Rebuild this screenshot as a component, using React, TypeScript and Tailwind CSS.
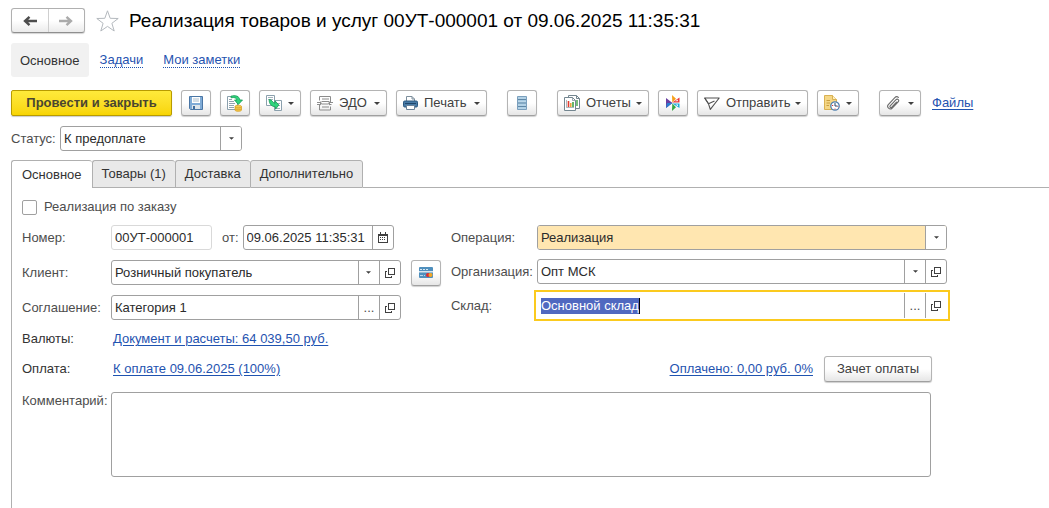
import React, { useEffect, useRef } from 'react';
import { clsx } from 'clsx';

const fieldBox = 'flex h-[25px] rounded-[3px] border border-[#a0a0a0] bg-white overflow-hidden';
const inputText = 'min-w-0 flex-1 bg-transparent px-[3px] text-[#2b2b2b] outline-none';
const sideButton = 'flex w-[21px] shrink-0 items-center justify-center border-l border-[#a0a0a0]';
const linkClass = 'text-[#1f53b0] underline underline-offset-2';

export default function App() {
  return (
    <main className="flex min-h-screen flex-col bg-white font-['Liberation_Sans',Arial,sans-serif] text-[13px] leading-4 text-[#4d4d4d]">
      {/* Title */}
      <header className="flex items-center pt-2 pl-[11px]">
        <div className="flex h-[25px] w-[74px] rounded-[3px] border border-[#b0b0b0] border-b-[#8f8f8f] bg-linear-to-b from-white from-50% to-[#ebebeb] shadow-[0_1px_1px_#d4d4d4]">
          <button aria-label="Назад" className="flex flex-1 items-center justify-center border-r border-[#cfcfcf] text-[#4d4d4d]">
            <ArrowIcon />
          </button>
          <button aria-label="Вперед" className="flex flex-1 items-center justify-center text-[#ababab]">
            <ArrowIcon flip />
          </button>
        </div>
        <button aria-label="В избранное" className="ml-[10px]">
          <svg width="25" height="24" viewBox="0 0 25 24" fill="none" stroke="#b4b9be">
            <path d="M12.5 1.8 15.2 9.3 23.2 9.5 16.9 14.3 19.2 22 12.5 17.4 5.8 22 8.1 14.3 1.8 9.5 9.8 9.3Z" />
          </svg>
        </button>
        <h1 className="ml-[9px] text-[19px] leading-6 text-black">
          Реализация товаров и услуг 00УТ-000001 от 09.06.2025 11:35:31
        </h1>
      </header>

      {/* Sections */}
      <nav className="mt-[10px] flex h-[34px] items-center pl-[11px]">
        <span className="flex h-full items-center rounded-[3px] bg-[#f1f1f1] px-[9px] pt-px text-[#333]">Основное</span>
        <a href="#tasks" className="ml-[11px] border-b border-dotted border-[#1f53b0] leading-[14px] text-[#1f53b0]">
          Задачи
        </a>
        <a href="#notes" className="ml-5 border-b border-dotted border-[#1f53b0] leading-[14px] text-[#1f53b0]">
          Мои заметки
        </a>
      </nav>

      <Toolbar />

      <div className="mt-[10px] flex items-center pl-[11px]">
        <label htmlFor="status" className="w-[49px]">Статус:</label>
        <SelectField id="status" value="К предоплате" className="w-[182px]" />
      </div>

      {/* Tabs */}
      <div role="tablist" className="mt-[9px] flex pl-[11px] text-[#333]">
        <Tab active>Основное</Tab>
        <Tab>Товары (1)</Tab>
        <Tab>Доставка</Tab>
        <Tab last>Дополнительно</Tab>
        <div className="flex-1 border-b border-[#b0b0b0]" />
      </div>

      <section className="ml-[11px] flex-1 border-l border-[#b0b0b0] pt-[11px] pr-4 pl-[10px]">
        <div className="max-w-[925px]">
          <label className="flex w-fit items-center gap-[7px]">
            <input type="checkbox" className="size-[15px] appearance-none rounded-[2px] border border-[#a0a0a0] bg-white" />
            Реализация по заказу
          </label>

          <div className="mt-[10px] flex gap-[10px]">
            <div className="flex flex-1 flex-col gap-[10px]">
              <div className="flex items-center">
                <label htmlFor="number" className="w-[89px] shrink-0">Номер:</label>
                <div className={clsx(fieldBox, 'w-[101px] border-[#d9d9d9]')}>
                  <input id="number" defaultValue="00УТ-000001" className={inputText} />
                </div>
                <label htmlFor="date" className="mr-[4px] ml-[10px]">от:</label>
                <div className={clsx(fieldBox, 'w-[151px]')}>
                  <input id="date" defaultValue="09.06.2025 11:35:31" className={inputText} />
                  <button aria-label="Выбрать дату" className={sideButton}><CalendarIcon /></button>
                </div>
              </div>
              <div className="flex h-[25px] items-center">
                <label htmlFor="client" className="w-[89px] shrink-0">Клиент:</label>
                <LookupField id="client" value="Розничный покупатель" />
                <ToolButton label="Карта лояльности" className="ml-[10px] w-[30px]"><CardIcon /></ToolButton>
              </div>
              <div className="flex items-center">
                <label htmlFor="agreement" className="w-[89px] shrink-0">Соглашение:</label>
                <LookupField id="agreement" value="Категория 1" dots />
                <div className="w-10 shrink-0" />
              </div>
            </div>

            <div className="flex flex-1 grow-[1.184] flex-col gap-[9px]">
              <div className="flex items-center">
                <label htmlFor="operation" className="w-[86px] shrink-0">Операция:</label>
                <SelectField id="operation" value="Реализация" className="flex-1" tinted />
              </div>
              <div className="flex items-center">
                <label htmlFor="company" className="w-[86px] shrink-0">Организация:</label>
                <LookupField id="company" value="Опт МСК" />
              </div>
              <div className="flex h-[25px] items-center">
                <label htmlFor="warehouse" className="w-[83px] shrink-0">Склад:</label>
                <WarehouseField />
              </div>
            </div>
          </div>

          <div className="mt-[11px] flex items-center text-[#333]">
            <span className="w-[91px]">Валюты:</span>
            <a href="#currency" className={linkClass}>Документ и расчеты: 64 039,50 руб.</a>
          </div>

          <div className="mt-[9px] flex items-center pr-[15px] text-[#333]">
            <span className="w-[91px]">Оплата:</span>
            <a href="#payment" className={linkClass}>К оплате 09.06.2025 (100%)</a>
            <a href="#paid" className={clsx(linkClass, 'mr-[11px] ml-auto')}>Оплачено: 0,00 руб. 0%</a>
            <ToolButton className="w-[108px]">Зачет оплаты</ToolButton>
          </div>

          <div className="mt-[10px] flex pr-4">
            <label htmlFor="comment" className="w-[89px] shrink-0 pt-px">Комментарий:</label>
            <textarea id="comment" className="h-[85px] flex-1 resize-none rounded-[3px] border border-[#a0a0a0] p-1 outline-none" />
          </div>
        </div>
      </section>
    </main>
  );
}

function Toolbar() {
  return (
    <div className="mt-[13px] flex items-center gap-[9px] pl-[11px]">
      <button className="h-[26px] w-[161px] rounded-[2px] border border-[#b89b00] bg-linear-to-b from-[#ffea3a] to-[#f8d500] font-bold text-[#4a4530] shadow-[0_1px_1px_#ccc]">
        Провести и закрыть
      </button>
      <ToolButton label="Записать" className="w-[30px]"><SaveIcon /></ToolButton>
      <ToolButton label="Провести" className="w-[30px]"><PostIcon /></ToolButton>
      <ToolButton label="Создать на основании" className="w-[42px]" menu><CreateFromIcon /></ToolButton>
      <ToolButton className="w-[77px]" menu><EdoIcon />ЭДО</ToolButton>
      <ToolButton className="w-[91px]" menu><PrinterIcon />Печать</ToolButton>
      <ToolButton label="Список" className="ml-[11px] w-[30px]"><ListIcon /></ToolButton>
      <ToolButton className="ml-[11px] w-[92px]" menu><ReportIcon />Отчеты</ToolButton>
      <ToolButton label="Связи" className="w-[30px]"><PinwheelIcon /></ToolButton>
      <ToolButton className="w-[111px]" menu><SendIcon />Отправить</ToolButton>
      <ToolButton label="Напоминание" className="w-[42px]" menu><ReminderIcon /></ToolButton>
      <ToolButton label="Присоединить" className="ml-[11px] w-[42px]" menu><ClipIcon /></ToolButton>
      <a href="#files" className={clsx(linkClass, 'ml-[2px]')}>Файлы</a>
    </div>
  );
}

type ToolButtonProps = {
  label?: string;
  className?: string;
  menu?: boolean;
  children: React.ReactNode;
};

function ToolButton({ label, className, menu, children }: ToolButtonProps) {
  return (
    <button
      aria-label={label}
      className={clsx(
        'flex h-[26px] shrink-0 items-center rounded-[3px] border border-[#b4b4b4] border-b-[#a0a0a0] bg-linear-to-b from-white from-50% to-[#e6e6e6] whitespace-nowrap text-[#404040] shadow-[0_1px_1px_#d0d0d0]',
        menu ? 'justify-between px-[6px]' : 'justify-center',
        className
      )}
    >
      <span className="flex items-center gap-[6px]">{children}</span>
      {menu && <Caret />}
    </button>
  );
}

function Tab({ active, last, children }: { active?: boolean; last?: boolean; children: React.ReactNode }) {
  return (
    <button
      role="tab"
      aria-selected={!!active}
      className={clsx(
        'h-7 rounded-t-[3px] border-t border-l border-[#b0b0b0]',
        active ? 'bg-white px-[10px]' : 'border-b bg-[#e9e9e9] px-[9px]',
        last && 'border-r'
      )}
    >
      {children}
    </button>
  );
}

type SelectFieldProps = { id: string; value: string; className?: string; tinted?: boolean };

function SelectField({ id, value, className, tinted }: SelectFieldProps) {
  return (
    <div className={clsx('relative', fieldBox, className)}>
      <select
        id={id}
        className={clsx('w-full appearance-none pr-6 pl-[3px] text-[#2b2b2b] outline-none', tinted && 'bg-[#ffe6b0]')}
      >
        <option>{value}</option>
      </select>
      <span className={clsx(sideButton, 'pointer-events-none absolute inset-y-0 right-0 bg-white')}>
        <Caret small />
      </span>
    </div>
  );
}

function LookupField({ id, value, dots }: { id: string; value: string; dots?: boolean }) {
  return (
    <div className={clsx(fieldBox, 'min-w-0 flex-1')}>
      <input id={id} defaultValue={value} className={inputText} />
      <button aria-label="Выбрать" className={sideButton}>{dots ? '...' : <Caret small />}</button>
      <button aria-label="Открыть" className={sideButton}><OpenIcon /></button>
    </div>
  );
}

function WarehouseField() {
  const ref = useRef<HTMLInputElement>(null);

  useEffect(() => {
    ref.current?.focus();
    ref.current?.select();
  }, []);

  return (
    <div className="-mr-[3px] flex h-[31px] min-w-0 flex-1 border-2 border-[#fbca1e] bg-white py-px pr-[2px] pl-[5px]">
      <label htmlFor="warehouse" className="flex min-w-0 flex-1 items-center">
        <input
          id="warehouse"
          ref={ref}
          defaultValue="Основной склад"
          className="field-sizing-content text-[#2b2b2b] outline-none selection:bg-[#5068c0] selection:text-white"
        />
        <span className="h-4 w-px bg-black" />
      </label>
      <button aria-label="Выбрать" className={sideButton}>...</button>
      <button aria-label="Открыть" className={sideButton}><OpenIcon /></button>
    </div>
  );
}

function Caret({ small }: { small?: boolean }) {
  return (
    <svg width={small ? 5 : 6} height="3" viewBox="0 0 6 3" fill="#404040" className="shrink-0">
      <path d="M0 0H6L3 3Z" />
    </svg>
  );
}

function ArrowIcon({ flip }: { flip?: boolean }) {
  return (
    <svg width="14" height="12" viewBox="0 0 14 12" fill="none" stroke="currentColor" strokeWidth="2.4" className={clsx(flip && 'rotate-180')}>
      <path d="M2 6H14M6.5 1.8 2 6 6.5 10.2" />
    </svg>
  );
}

function OpenIcon() {
  return (
    <svg width="10" height="10" viewBox="0 0 10 10" fill="none" stroke="#404040" shapeRendering="crispEdges">
      <path d="M3.5 .5H9.5V6.5H3.5ZM2 3.5H.5V9.5H6.5V8" />
    </svg>
  );
}

function CalendarIcon() {
  return (
    <svg width="10" height="11" viewBox="0 0 10 11" fill="none" stroke="#404040" shapeRendering="crispEdges">
      <path d="M.5 2.5H9.5V10.5H.5ZM0 3.5H10M2.5 0V3M7.5 0V3" />
      <path d="M2 5.5H8M2 7.5H8" strokeDasharray="1 1" />
    </svg>
  );
}

function CardIcon() {
  return (
    <svg width="14" height="11" viewBox="0 0 14 11">
      <rect width="14" height="11" rx="1" fill="#4f8fbd" />
      <path d="M0 4H14V5.5H0Z" fill="#d8e6ef" />
      <path d="M1 2.5H9" stroke="#d7e8f3" strokeDasharray="2 1" />
      <path d="M1 8.5H6" stroke="#b8d6e8" strokeDasharray="3 1" />
      <circle cx="9" cy="8" r="2" fill="#df2a32" />
      <circle cx="11.5" cy="8" r="2" fill="#f5a623" />
    </svg>
  );
}

function SaveIcon() {
  return (
    <svg width="14" height="14" viewBox="0 0 14 14">
      <path d="M.5 .5H13.5V13.5H1.5L.5 12.5Z" fill="#7fabd6" stroke="#4a76a5" />
      <path d="M3 1H11V7H3Z" fill="#fff" />
      <path d="M4 3H10M4 5H10" stroke="#a9bccb" />
      <path d="M3 9H11V13H3Z" fill="#dce4ea" />
      <path d="M4 10H6V13H4Z" fill="#3f6c9c" />
    </svg>
  );
}

function PostIcon() {
  return (
    <svg width="16" height="17" viewBox="0 0 16 17" fill="none">
      <path d="M.5 1.5H10.5V14.5H.5Z" fill="#fff" stroke="#8ba0ad" />
      <path d="M2 4.5H5M2 6.5H7M2 8.5H8M2 10.5H7M2 12.5H7" stroke="#91a4af" />
      <path d="M4 1.2C8-.2 12.5 1 12.8 5H15.5L11.3 9.5 7.5 5H10C9.5 3 7.5 2 4 2.8Z" fill="#2fd47c" stroke="#119b53" strokeWidth=".8" />
      <path d="M8 11.5C8 9.8 14.5 9.8 14.5 11.5V15C14.5 16.8 8 16.8 8 15Z" fill="#f3c74d" stroke="#d69d20" strokeWidth=".7" />
      <path d="M8 12C9 13.2 13.5 13.2 14.5 12M8 14C9 15 13.5 15 14.5 14" stroke="#d69d20" strokeWidth=".7" />
    </svg>
  );
}

function CreateFromIcon() {
  return (
    <svg width="17" height="16" viewBox="0 0 17 16" fill="none">
      <path d="M.5 .5H8.5V10.5H.5ZM8.5 5.5H15.5V15.5H8.5Z" fill="#fff" stroke="#8ba0ad" />
      <path d="M2 2.5H7M2 4.5H7M11 8.5H14M11 10.5H14M10 13.5H14" stroke="#a3b2bc" />
      <path d="M3.2 4.5C6 4.5 6.2 7.5 9 8.3V5.8L12.8 10 9.5 14.2V11.8C5.5 11.5 3 9 3.2 4.5Z" fill="#2fd47c" stroke="#119b53" strokeWidth=".8" />
    </svg>
  );
}

function EdoIcon() {
  return (
    <svg width="16" height="15" viewBox="0 0 16 15" fill="none" stroke="#8c8c8c">
      <path d="M2.5 4.5V.5H13.5V6M2.5 9V14H13.5V10.5" />
      <path d="M5 3H12M4.5 5.5H12M4.5 8H11.5M5 11H12" />
      <path d="M0 6.5H3.5M0 8.5H3.5M12 6.5H16M12 8.5H14.5" />
      <path d="M3 5 5 7.3 3 9.5ZM13 5 11 7.3 13 9.5Z" fill="#8c8c8c" stroke="none" />
    </svg>
  );
}

function PrinterIcon() {
  return (
    <svg width="15" height="14" viewBox="0 0 15 14" fill="none">
      <path d="M3.5 5V.5H9L11.5 3V5" fill="#fff" stroke="#7c8e9c" />
      <path d="M9 .5V3H11.5" stroke="#7c8e9c" />
      <rect x=".5" y="5" width="14" height="6" rx="1.2" fill="#477aa6" stroke="#28567e" />
      <path d="M2 7.5H13" stroke="#1e466b" />
      <path d="M3.5 9.5H11.5V13.5H3.5Z" fill="#fff" stroke="#6a8298" />
    </svg>
  );
}

function ListIcon() {
  return (
    <svg width="10" height="14" viewBox="0 0 10 14">
      <path d="M.5 .5H9.5V13.5H.5Z" fill="#a9cbe2" stroke="#7a9fbd" />
      <path d="M1 3.5H9M1 7H9M1 10.5H9" stroke="#5f87a6" />
      <path d="M1 2H9M1 5.5H9M1 9H9M1 12.2H9" stroke="#c4dcec" strokeWidth=".7" />
    </svg>
  );
}

function ReportIcon() {
  return (
    <svg width="16" height="16" viewBox="0 0 16 16" fill="none">
      <path d="M4.5 .5H12.5L15.5 3.5V13.5H4.5Z" fill="#fff" stroke="#748690" />
      <path d="M12.5 .5V3.5H15.5" stroke="#748690" />
      <path d="M13 5V11" stroke="#3da445" strokeWidth="1.4" />
      <path d="M.5 2.5H8.5L11.5 5.5V15.5H.5Z" fill="#fff" stroke="#748690" />
      <path d="M8.5 2.5V5.5H11.5" stroke="#748690" strokeWidth=".7" />
      <path d="M2.5 5V12.5H10" stroke="#748690" strokeWidth=".6" />
      <path d="M4.5 6V12" stroke="#e23c2f" strokeWidth="1.6" />
      <path d="M6.8 8V12" stroke="#e89a26" strokeWidth="1.4" />
      <path d="M9 7V12" stroke="#3da445" strokeWidth="1.6" />
    </svg>
  );
}

function PinwheelIcon() {
  return (
    <svg width="14" height="16" viewBox="0 0 14 16">
      <path d="M6 0 10 3.8 6.3 7.5Z" fill="#f6a11c" />
      <path d="M6.3 7.5 13.5 2.5V7.5Z" fill="#e8363a" />
      <path d="M9 6.2 11.8 4.4V6.2Z" fill="#fff" />
      <path d="M6.3 8.5H13.5V13Z" fill="#19a9d8" />
      <path d="M9.5 9.6H12V11.2Z" fill="#fff" />
      <path d="M6.3 8.5 10 12.2 6 16Z" fill="#35a845" />
      <path d="M0 3 6.5 8 0 13Z" fill="#6a3fa0" />
      <path d="M1 8H6.5L0 13Z" fill="#2a7ed0" />
    </svg>
  );
}

function SendIcon() {
  return (
    <svg width="16" height="13" viewBox="0 0 16 13" fill="none" stroke="#505050" strokeWidth="1.1" strokeLinejoin="round">
      <path d="M.7 1H15.2L6.3 12.3 4.5 6.8ZM4.5 6.8 10.5 4" />
      <path d="M.7 1 4.5 6.8" />
    </svg>
  );
}

function ReminderIcon() {
  return (
    <svg width="16" height="16" viewBox="0 0 16 16" fill="none">
      <path d="M.5 .5H8.5L12.5 4.5V14.5H.5Z" fill="#f5d786" stroke="#d9b152" />
      <path d="M8.5 .5V4.5H12.5" fill="#fff0c0" stroke="#d9b152" />
      <path d="M2.5 5.5H6M2.5 8H6M2.5 10.5H5" stroke="#c99e3e" />
      <circle cx="11" cy="11" r="4.2" fill="#fff" stroke="#4d7fae" strokeWidth="1.3" />
      <path d="M11 8V11H13.5" stroke="#24496b" />
      <path d="M8 10.5H9.2M10.5 14H11.5M13.5 11.5H14.2" stroke="#d9383a" />
    </svg>
  );
}

function ClipIcon() {
  return (
    <svg width="14" height="14" viewBox="0 0 14 14" fill="none" stroke="#6b6b6b" strokeWidth="1.1" strokeLinecap="round">
      <path d="M10.5 6.2 5.8 11.2C4.8 12.2 3.2 11 4.2 9.8L9.8 3.8C11.6 2 13.8 4.2 12 6L6.2 12C3.8 14.5.2 11.2 2.3 8.6L8.6 1.8C9.8.6 11.5.6 12.4 1.4" />
    </svg>
  );
}
